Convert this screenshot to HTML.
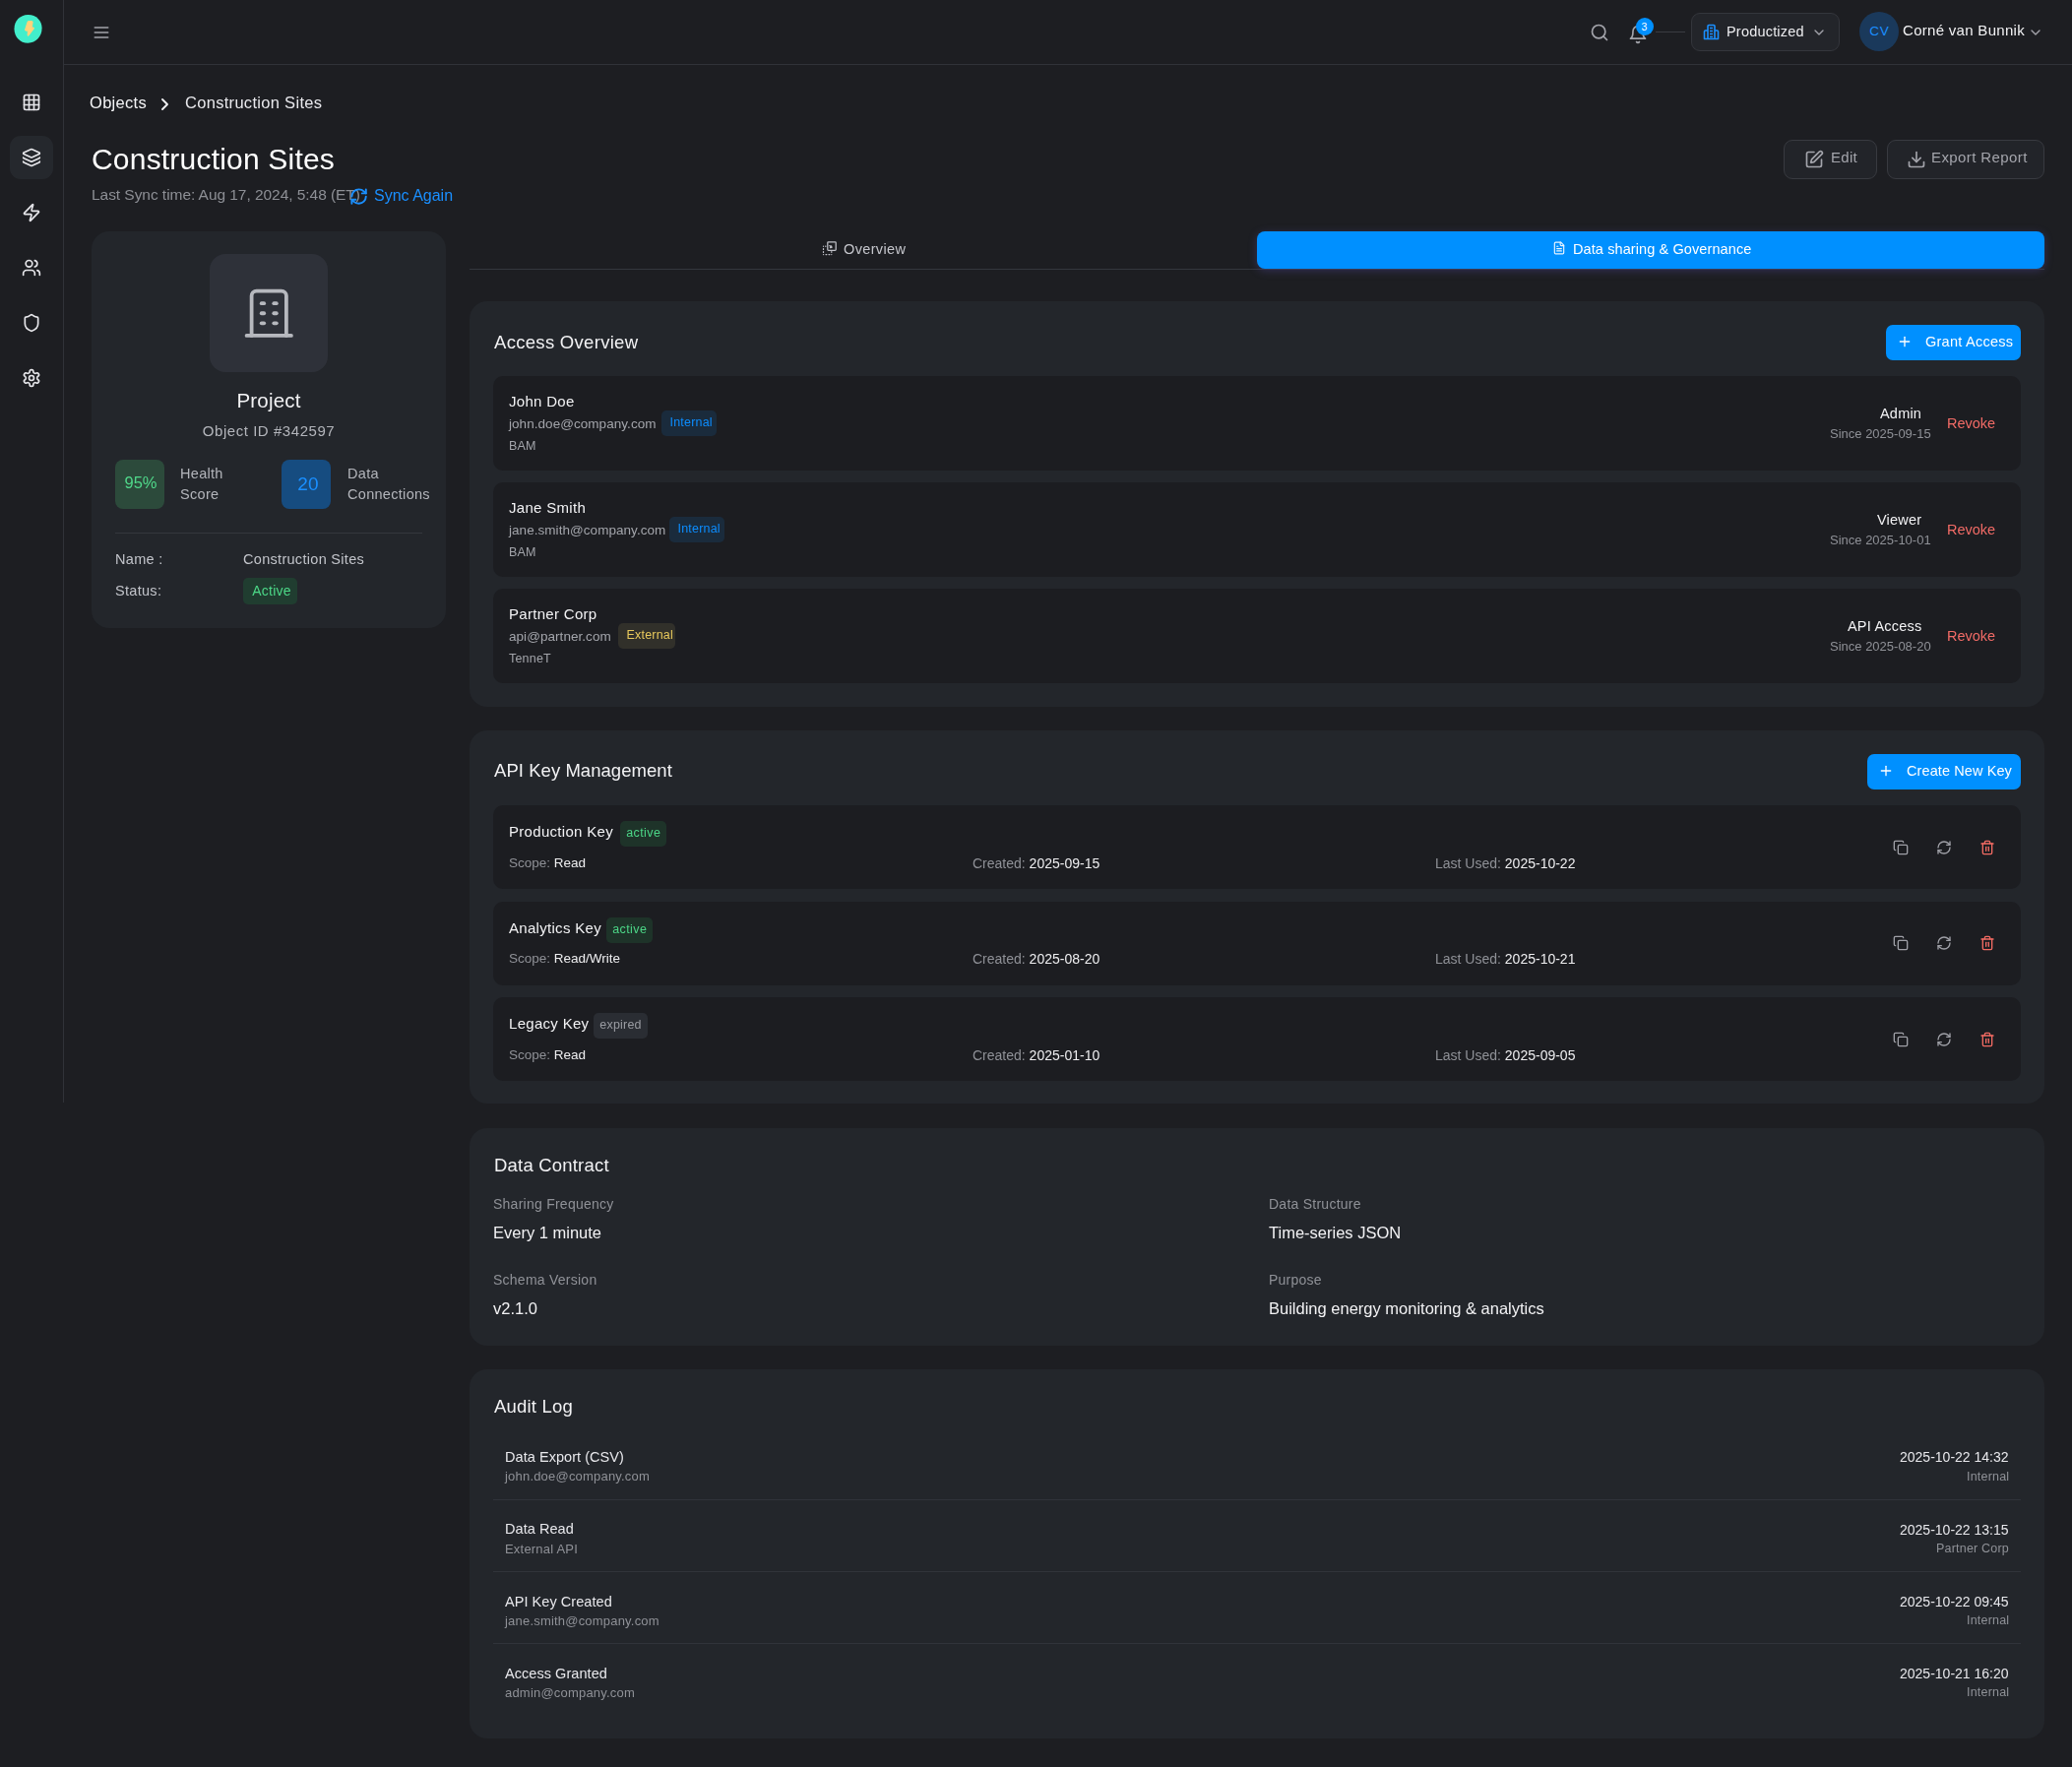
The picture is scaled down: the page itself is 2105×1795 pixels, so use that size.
<!DOCTYPE html>
<html>
<head>
<meta charset="utf-8">
<style>
*{box-sizing:border-box;margin:0;padding:0}
html,body{width:2105px;height:1795px;overflow:hidden;background:#1d1e22;font-family:"Liberation Sans",sans-serif;color:#f2f2f4;-webkit-font-smoothing:antialiased}
.t,.badge{will-change:transform}
.abs{position:absolute}
svg{display:block}
/* sidebar */
#sb{position:absolute;left:0;top:0;width:65px;height:1120px;border-right:1px solid #303238}
#hdr{position:absolute;left:65px;top:0;width:2040px;height:66px;border-bottom:1px solid #303238}
.card{position:absolute;background:#23262b;border-radius:18px}
.row{position:absolute;left:24px;width:1552px;background:#1c1d21;border-radius:10px}
.t{position:absolute;white-space:nowrap;line-height:1}
.btn-blue{position:absolute;background:#0090ff;border-radius:7px;color:#fff}
.badge{position:absolute;border-radius:5px;white-space:nowrap;line-height:1}
</style>
</head>
<body>

<!-- SIDEBAR -->
<div id="sb">
  <svg class="abs" style="left:12px;top:12px" width="34" height="34" viewBox="12 12 34 34">
    <path d="M28.3 14.9 C36.5 14.6 42.6 20.5 42.6 28.6 C42.6 37.3 36.6 43.7 28.4 43.7 C20.2 43.7 14.5 37.5 14.5 29.2 C14.5 20.8 20.3 15.2 28.3 14.9 Z" fill="#42eecb"/>
    <path d="M28.8 21.5 H32.4 Q33.3 21.5 33.2 22.5 L32.4 27.9 H33.9 Q35 28.1 34.4 29.1 L29.2 36 Q28.3 37 28.1 35.8 L28.3 31.2 H26.2 Q25.2 31 25.5 30.1 L28 22.2 Q28.2 21.5 28.8 21.5 Z" fill="#ffd27a" stroke="#ffd27a" stroke-width="0.8" stroke-linejoin="round"/>
  </svg>
  <!-- nav icons -->
  <svg class="abs" style="left:22.2px;top:93.5px" width="20" height="20" viewBox="0 0 24 24" fill="none" stroke="#e6e6ea" stroke-width="2" stroke-linecap="round" stroke-linejoin="round"><rect width="18" height="18" x="3" y="3" rx="2"/><path d="M3 9h18"/><path d="M3 15h18"/><path d="M9 3v18"/><path d="M15 3v18"/></svg>
  <div class="abs" style="left:10px;top:138px;width:44px;height:44px;border-radius:11px;background:#25282d"></div>
  <svg class="abs" style="left:21.9px;top:149.6px" width="20" height="20" viewBox="0 0 24 24" fill="none" stroke="#e6e6ea" stroke-width="2" stroke-linecap="round" stroke-linejoin="round"><path d="M12.83 2.18a2 2 0 0 0-1.66 0L2.6 6.08a1 1 0 0 0 0 1.83l8.58 3.91a2 2 0 0 0 1.66 0l8.58-3.9a1 1 0 0 0 0-1.83z"/><path d="M2 12a1 1 0 0 0 .58.91l8.6 3.91a2 2 0 0 0 1.65 0l8.58-3.9A1 1 0 0 0 22 12"/><path d="M2 17a1 1 0 0 0 .58.91l8.6 3.91a2 2 0 0 0 1.65 0l8.58-3.9A1 1 0 0 0 22 17"/></svg>
  <svg class="abs" style="left:21.9px;top:206px" width="20" height="20" viewBox="0 0 24 24" fill="none" stroke="#e6e6ea" stroke-width="2" stroke-linecap="round" stroke-linejoin="round"><path d="M4 14a1 1 0 0 1-.78-1.63l9.9-10.2a.5.5 0 0 1 .86.46l-1.92 6.02A1 1 0 0 0 13 10h7a1 1 0 0 1 .78 1.63l-9.9 10.2a.5.5 0 0 1-.86-.46l1.92-6.02A1 1 0 0 0 11 14z"/></svg>
  <svg class="abs" style="left:21.9px;top:261.5px" width="20" height="20" viewBox="0 0 24 24" fill="none" stroke="#e6e6ea" stroke-width="2" stroke-linecap="round" stroke-linejoin="round"><path d="M16 21v-2a4 4 0 0 0-4-4H6a4 4 0 0 0-4 4v2"/><circle cx="9" cy="7" r="4"/><path d="M22 21v-2a4 4 0 0 0-3-3.87"/><path d="M16 3.13a4 4 0 0 1 0 7.75"/></svg>
  <svg class="abs" style="left:21.9px;top:317.7px" width="20" height="20" viewBox="0 0 24 24" fill="none" stroke="#e6e6ea" stroke-width="2" stroke-linecap="round" stroke-linejoin="round"><path d="M20 13c0 5-3.5 7.5-7.66 8.95a1 1 0 0 1-.67-.01C7.5 20.5 4 18 4 13V6a1 1 0 0 1 1-1c2 0 4.5-1.2 6.24-2.72a1.17 1.17 0 0 1 1.52 0C14.51 3.81 17 5 19 5a1 1 0 0 1 1 1z"/></svg>
  <svg class="abs" style="left:22.2px;top:373.9px" width="20" height="20" viewBox="0 0 24 24" fill="none" stroke="#e6e6ea" stroke-width="2" stroke-linecap="round" stroke-linejoin="round"><path d="M12.22 2h-.44a2 2 0 0 0-2 2v.18a2 2 0 0 1-1 1.73l-.43.25a2 2 0 0 1-2 0l-.15-.08a2 2 0 0 0-2.73.73l-.22.38a2 2 0 0 0 .73 2.73l.15.1a2 2 0 0 1 1 1.72v.51a2 2 0 0 1-1 1.74l-.15.09a2 2 0 0 0-.73 2.73l.22.38a2 2 0 0 0 2.73.73l.15-.08a2 2 0 0 1 2 0l.43.25a2 2 0 0 1 1 1.73V20a2 2 0 0 0 2 2h.44a2 2 0 0 0 2-2v-.18a2 2 0 0 1 1-1.73l.43-.25a2 2 0 0 1 2 0l.15.08a2 2 0 0 0 2.73-.73l.22-.39a2 2 0 0 0-.73-2.73l-.15-.08a2 2 0 0 1-1-1.74v-.5a2 2 0 0 1 1-1.74l.15-.09a2 2 0 0 0 .73-2.73l-.22-.38a2 2 0 0 0-2.73-.73l-.15.08a2 2 0 0 1-2 0l-.43-.25a2 2 0 0 1-1-1.73V4a2 2 0 0 0-2-2z"/><circle cx="12" cy="12" r="3"/></svg>
</div>

<!-- HEADER -->
<div id="hdr"></div>
<!-- hamburger -->
<svg class="abs" style="left:92.8px;top:22.5px" width="20" height="20" viewBox="0 0 24 24" fill="none" stroke="#a3a4ab" stroke-width="2" stroke-linecap="round"><line x1="4" x2="20" y1="12" y2="12"/><line x1="4" x2="20" y1="6" y2="6"/><line x1="4" x2="20" y1="18" y2="18"/></svg>
<!-- search -->
<svg class="abs" style="left:1615px;top:22.5px" width="20" height="20" viewBox="0 0 24 24" fill="none" stroke="#a3a4ab" stroke-width="2" stroke-linecap="round" stroke-linejoin="round"><circle cx="11" cy="11" r="8"/><path d="m21 21-4.3-4.3"/></svg>
<!-- bell -->
<svg class="abs" style="left:1654.3px;top:24.5px" width="20" height="20" viewBox="0 0 24 24" fill="none" stroke="#a3a4ab" stroke-width="2" stroke-linecap="round" stroke-linejoin="round"><path d="M6 8a6 6 0 0 1 12 0c0 7 3 9 3 9H3s3-2 3-9"/><path d="M10.3 21a1.94 1.94 0 0 0 3.4 0"/></svg>
<div class="abs" style="left:1661.5px;top:18.3px;width:18px;height:18px;border-radius:50%;background:#0090ff;color:#fff;font-size:10.5px;line-height:18px;text-align:center">3</div>
<div class="abs" style="left:1682px;top:32px;width:30px;height:1px;background:#3a3c42"></div>
<!-- productized -->
<div class="abs" style="left:1718px;top:13px;width:151px;height:39px;border:1px solid #34363c;background:#23252a;border-radius:9px"></div>
<svg class="abs" style="left:1730px;top:24px" width="17" height="17" viewBox="0 0 17 17" fill="none" stroke="#1a8fff" stroke-width="1.6" stroke-linejoin="round">
  <path d="M5 15.5 V2.5 a1 1 0 0 1 1-1 h5 a1 1 0 0 1 1 1 V15.5"/>
  <path d="M5 7 H2.5 a1 1 0 0 0-1 1 V15.5 H15.5 V8 a1 1 0 0 0-1-1 H12"/>
  <path d="M7 4.5h3M7 7.5h3M7 10.5h3M7 13.5h3"/>
</svg>
<div class="t" style="left:1754px;top:25px;font-size:14.5px;color:#ececef;letter-spacing:0.2px">Productized</div>
<svg class="abs" style="left:1839.7px;top:24.7px" width="16" height="16" viewBox="0 0 24 24" fill="none" stroke="#a3a4ab" stroke-width="2" stroke-linecap="round" stroke-linejoin="round"><path d="m6 9 6 6 6-6"/></svg>
<!-- avatar -->
<div class="abs" style="left:1889px;top:12.2px;width:40px;height:40px;border-radius:50%;background:#1a395b;color:#1a8fff;font-size:13.5px;line-height:39px;text-align:center;letter-spacing:0.6px;text-indent:0.6px">CV</div>
<div class="t" style="left:1933.3px;top:23px;font-size:15px;color:#f2f2f4;letter-spacing:0.3px">Corné van Bunnik</div>
<svg class="abs" style="left:2060.2px;top:24.5px" width="16" height="16" viewBox="0 0 24 24" fill="none" stroke="#a3a4ab" stroke-width="2" stroke-linecap="round" stroke-linejoin="round"><path d="m6 9 6 6 6-6"/></svg>

<!-- breadcrumb -->
<div class="t" style="left:90.5px;top:96px;font-size:16.5px;color:#f4f4f6;letter-spacing:0.3px">Objects</div>
<svg class="abs" style="left:161px;top:98px" width="13" height="16" viewBox="0 0 13 16" fill="none" stroke="#f0f0f2" stroke-width="1.9" stroke-linecap="round" stroke-linejoin="round">
  <path d="M4 3 L9 8 L4 13"/>
</svg>
<div class="t" style="left:188px;top:96px;font-size:16.5px;color:#e8e8ec;letter-spacing:0.3px">Construction Sites</div>

<!-- title -->
<div class="t" style="left:93px;top:146.8px;font-size:30px;color:#ffffff;letter-spacing:0.2px">Construction Sites</div>
<div class="t" style="left:93px;top:189.5px;font-size:15.5px;color:#8d8f95;letter-spacing:-0.05px">Last Sync time: Aug 17, 2024, 5:48 (ET)</div>
<svg class="abs" style="left:355.25px;top:189.5px" width="19.2" height="19.2" viewBox="0 0 24 24" fill="none" stroke="#1a8fff" stroke-width="2.4" stroke-linecap="round" stroke-linejoin="round"><path d="M3 12a9 9 0 0 1 9-9 9.75 9.75 0 0 1 6.74 2.74L21 8"/><path d="M21 3v5h-5"/><path d="M21 12a9 9 0 0 1-9 9 9.75 9.75 0 0 1-6.74-2.74L3 16"/><path d="M8 16H3v5"/></svg>
<div class="t" style="left:379.5px;top:190.5px;font-size:16px;color:#1a8fff;letter-spacing:0px">Sync Again</div>

<!-- edit/export -->
<div class="abs" style="left:1812px;top:142px;width:95px;height:40px;border:1px solid #383a40;background:#222429;border-radius:9px"></div>
<svg class="abs" style="left:1833px;top:151.6px" width="20" height="20" viewBox="0 0 24 24" fill="none" stroke="#a3a4ab" stroke-width="2" stroke-linecap="round" stroke-linejoin="round"><path d="M12 3H5a2 2 0 0 0-2 2v14a2 2 0 0 0 2 2h14a2 2 0 0 0 2-2v-7"/><path d="M18.375 2.625a1 1 0 0 1 3 3l-9.013 9.014a2 2 0 0 1-.853.505l-2.873.84a.5.5 0 0 1-.62-.62l.84-2.873a2 2 0 0 1 .506-.852z"/></svg>
<div class="t" style="left:1859.5px;top:152.3px;font-size:15px;color:#a3a4ab;letter-spacing:0.3px">Edit</div>
<div class="abs" style="left:1916.5px;top:142px;width:160.5px;height:40px;border:1px solid #383a40;background:#222429;border-radius:9px"></div>
<svg class="abs" style="left:1937.1px;top:151.9px" width="20" height="20" viewBox="0 0 24 24" fill="none" stroke="#a3a4ab" stroke-width="2" stroke-linecap="round" stroke-linejoin="round"><path d="M21 15v4a2 2 0 0 1-2 2H5a2 2 0 0 1-2-2v-4"/><polyline points="7 10 12 15 17 10"/><line x1="12" x2="12" y1="15" y2="3"/></svg>
<div class="t" style="left:1961.7px;top:152.3px;font-size:15px;color:#a3a4ab;letter-spacing:0.4px">Export Report</div>


<!-- LEFT CARD -->
<div class="card" style="left:93px;top:235px;width:360px;height:403px"></div>
<div class="abs" style="left:213px;top:258px;width:120px;height:120px;border-radius:16px;background:#2e3139"></div>
<svg class="abs" style="left:242.9px;top:288px" width="60.5" height="60.5" viewBox="0 0 24 24" fill="none" stroke="#b6b8be" stroke-width="1.5" stroke-linecap="round" stroke-linejoin="round"><path d="M3 21h18"/><path d="M9 8h1"/><path d="M9 12h1"/><path d="M9 16h1"/><path d="M14 8h1"/><path d="M14 12h1"/><path d="M14 16h1"/><path d="M5 21v-16a2 2 0 0 1 2 -2h10a2 2 0 0 1 2 2v16"/></svg>
<div class="t" style="left:93px;width:360px;text-align:center;top:397px;font-size:20.5px;color:#f2f2f4;letter-spacing:0.2px">Project</div>
<div class="t" style="left:93px;width:360px;text-align:center;top:430px;font-size:15px;color:#b3b5bb;letter-spacing:0.55px">Object ID #342597</div>
<div class="abs" style="left:117px;top:467px;width:50px;height:50px;border-radius:8px;background:#2c4a3b"></div>
<div class="t" style="left:118px;width:50px;text-align:center;top:482px;font-size:16.5px;color:#50d88a;letter-spacing:0px">95%</div>
<div class="t" style="left:183px;top:471px;font-size:14.5px;color:#b3b5bb;line-height:21px;white-space:normal;width:80px;letter-spacing:0.3px">Health<br>Score</div>
<div class="abs" style="left:286px;top:467px;width:50px;height:50px;border-radius:8px;background:#164c80"></div>
<div class="t" style="left:287.7px;width:50px;text-align:center;top:482px;font-size:19px;color:#1a8fff;letter-spacing:0.3px">20</div>
<div class="t" style="left:352.5px;top:471px;font-size:14.5px;color:#b3b5bb;line-height:21px;white-space:normal;width:100px;letter-spacing:0.3px">Data<br>Connections</div>
<div class="abs" style="left:117px;top:541px;width:312px;height:1px;background:#34373d"></div>
<div class="t" style="left:117px;top:561px;font-size:14.5px;color:#c2c4ca;letter-spacing:0.3px">Name :</div>
<div class="t" style="left:247px;top:561px;font-size:14.5px;color:#c2c4ca;letter-spacing:0.3px">Construction Sites</div>
<div class="t" style="left:117px;top:593px;font-size:14.5px;color:#c2c4ca;letter-spacing:0.3px">Status:</div>
<div class="badge" style="left:247px;top:587px;width:55px;height:27px;background:#203d30;color:#4cd787;font-size:14px;line-height:27px;text-align:center;letter-spacing:0.2px;text-indent:3px">Active</div>

<!-- TABS -->
<div class="abs" style="left:477px;top:273px;width:1600px;height:1px;background:#34373d"></div>
<svg class="abs" style="left:834px;top:244px" width="17" height="17" viewBox="0 0 17 17" fill="none" stroke="#c0c1c8" stroke-width="1.25" stroke-linecap="round" stroke-linejoin="round">
  <rect x="6.8" y="1.8" width="8.4" height="8.6" rx="0.8"/>
  <path d="M2.5 6.2 v0.1 M2.5 8.6 v0.8 M2.5 11.6 v0.8 M2.5 14.6 h0.1 M5 14.6 h0.8 M8 14.6 h0.8 M10.8 14.6 v-0.1 M10.8 12.3 v-0.6 M4.6 6.2 h0.3"/>
  <path d="M8.8 5.6 L11 7.4 M10.6 5.8 L11 7.4 L9.4 7.6"/>
</svg>
<div class="t" style="left:857px;top:246px;font-size:14.5px;color:#c5c6cc;letter-spacing:0.35px">Overview</div>
<div class="abs" style="left:1277px;top:235px;width:800px;height:38px;border-radius:8px;background:#0090ff;box-shadow:0 2px 8px rgba(80,70,150,0.45)"></div>
<svg class="abs" style="left:1577.25px;top:245.4px" width="14" height="14" viewBox="0 0 24 24" fill="none" stroke="#eaf4ff" stroke-width="2" stroke-linecap="round" stroke-linejoin="round"><path d="M15 2H6a2 2 0 0 0-2 2v16a2 2 0 0 0 2 2h12a2 2 0 0 0 2-2V7Z"/><path d="M14 2v4a2 2 0 0 0 2 2h4"/><path d="M10 9H8"/><path d="M16 13H8"/><path d="M16 17H8"/></svg>
<div class="t" style="left:1598px;top:246px;font-size:14.5px;color:#ffffff;letter-spacing:0.1px">Data sharing &amp; Governance</div>


<!-- ACCESS OVERVIEW -->
<div class="card" style="left:477px;top:306px;width:1600px;height:412px">
  <div class="t" style="left:24.5px;top:33px;font-size:18.5px;color:#f2f2f4;letter-spacing:0.3px">Access Overview</div>
  <div class="btn-blue" style="left:1439px;top:24px;width:137px;height:35.5px"></div>
  <svg class="abs" style="left:1450.1px;top:33.3px" width="16" height="16" viewBox="0 0 24 24" fill="none" stroke="#fff" stroke-width="2" stroke-linecap="round"><path d="M5 12h14"/><path d="M12 5v14"/></svg>
  <div class="t" style="left:1479px;top:33.8px;font-size:14.5px;color:#fff;letter-spacing:0.25px">Grant Access</div>
  <div class="row" style="top:76px;height:95.5px">
    <div class="t" style="left:16px;top:18px;font-size:15px;color:#f2f2f4;letter-spacing:0.3px">John Doe</div>
    <div class="t" style="left:16px;top:41.5px;font-size:13.5px;color:#a3a5ab;letter-spacing:0.05px">john.doe@company.com</div>
    <div class="badge" style="left:171.2px;width:56px;text-align:center;padding:0;top:35px;height:25.5px;font-size:12.5px;line-height:25.5px;padding:0 7px;background:#1a2b3c;color:#0c8dff;letter-spacing:0.2px;text-indent:1.5px">Internal</div>
    <div class="t" style="left:16px;top:65px;font-size:12.5px;color:#a3a5ab;letter-spacing:0.2px">BAM</div>
    <div class="t" style="right:100.5px;top:30.7px;font-size:14.5px;color:#f2f2f4;letter-spacing:0.2px">Admin</div>
    <div class="t" style="left:1358px;top:51.6px;font-size:13px;color:#8f9197;letter-spacing:0px">Since 2025-09-15</div>
    <div class="t" style="left:1477px;top:40.8px;font-size:14.5px;color:#f26b66;letter-spacing:0px">Revoke</div>
  </div>
  <div class="row" style="top:184px;height:95.5px">
    <div class="t" style="left:16px;top:18px;font-size:15px;color:#f2f2f4;letter-spacing:0.3px">Jane Smith</div>
    <div class="t" style="left:16px;top:41.5px;font-size:13.5px;color:#a3a5ab;letter-spacing:0.05px">jane.smith@company.com</div>
    <div class="badge" style="left:179.3px;width:56px;text-align:center;padding:0;top:35px;height:25.5px;font-size:12.5px;line-height:25.5px;padding:0 7px;background:#1a2b3c;color:#0c8dff;letter-spacing:0.2px;text-indent:1.5px">Internal</div>
    <div class="t" style="left:16px;top:65px;font-size:12.5px;color:#a3a5ab;letter-spacing:0.2px">BAM</div>
    <div class="t" style="right:100.5px;top:30.7px;font-size:14.5px;color:#f2f2f4;letter-spacing:0.2px">Viewer</div>
    <div class="t" style="left:1358px;top:51.6px;font-size:13px;color:#8f9197;letter-spacing:0px">Since 2025-10-01</div>
    <div class="t" style="left:1477px;top:40.8px;font-size:14.5px;color:#f26b66;letter-spacing:0px">Revoke</div>
  </div>
  <div class="row" style="top:292px;height:95.5px">
    <div class="t" style="left:16px;top:18px;font-size:15px;color:#f2f2f4;letter-spacing:0.3px">Partner Corp</div>
    <div class="t" style="left:16px;top:41.5px;font-size:13.5px;color:#a3a5ab;letter-spacing:0.05px">api@partner.com</div>
    <div class="badge" style="left:127.4px;width:57.5px;text-align:center;padding:0;top:35px;height:25.5px;font-size:12.5px;line-height:25.5px;padding:0 7px;background:#31302a;color:#e8c95c;letter-spacing:0.2px;text-indent:1.5px">External</div>
    <div class="t" style="left:16px;top:65px;font-size:12.5px;color:#a3a5ab;letter-spacing:0.2px">TenneT</div>
    <div class="t" style="right:100.5px;top:30.7px;font-size:14.5px;color:#f2f2f4;letter-spacing:0.2px">API Access</div>
    <div class="t" style="left:1358px;top:51.6px;font-size:13px;color:#8f9197;letter-spacing:0px">Since 2025-08-20</div>
    <div class="t" style="left:1477px;top:40.8px;font-size:14.5px;color:#f26b66;letter-spacing:0px">Revoke</div>
  </div>
</div>


<!-- API KEYS -->
<div class="card" style="left:477px;top:742px;width:1600px;height:379px">
  <div class="t" style="left:24.5px;top:32px;font-size:18.5px;color:#f2f2f4;letter-spacing:0.05px">API Key Management</div>
  <div class="btn-blue" style="left:1420px;top:24px;width:156px;height:35.5px"></div>
  <svg class="abs" style="left:1431.1px;top:33.2px" width="16" height="16" viewBox="0 0 24 24" fill="none" stroke="#fff" stroke-width="2" stroke-linecap="round"><path d="M5 12h14"/><path d="M12 5v14"/></svg>
  <div class="t" style="left:1460px;top:33.6px;font-size:14.5px;color:#fff;letter-spacing:0.1px">Create New Key</div>
  <div class="row" style="top:76.0px;height:85px">
    <div class="t" style="left:16px;top:19.2px;font-size:15px;color:#f2f2f4;letter-spacing:0.3px">Production Key</div>
    <div class="badge" style="left:128.6px;top:16px;width:46.5px;height:25.5px;text-align:center;font-size:12.5px;line-height:25.5px;background:#1e3329;color:#4cd787;letter-spacing:0.4px;text-indent:1px">active</div>
    <div class="t" style="left:16px;top:51.8px;font-size:13.5px;color:#8f9197;letter-spacing:0px">Scope: <span style="color:#eeeef0">Read</span></div>
    <div class="t" style="left:487px;top:51.8px;font-size:14px;color:#8f9197;letter-spacing:0px">Created: <span style="color:#eeeef0">2025-09-15</span></div>
    <div class="t" style="left:957px;top:51.8px;font-size:14px;color:#8f9197;letter-spacing:0px">Last Used: <span style="color:#eeeef0">2025-10-22</span></div>
    <svg class="abs" style="left:1422px;top:34.5px" width="16" height="16" viewBox="0 0 24 24" fill="none" stroke="#9fa0a7" stroke-width="2" stroke-linecap="round" stroke-linejoin="round"><rect width="14" height="14" x="8" y="8" rx="2" ry="2"/><path d="M4 16c-1.1 0-2-.9-2-2V4c0-1.1.9-2 2-2h10c1.1 0 2 .9 2 2"/></svg>
    <svg class="abs" style="left:1465.7px;top:34.5px" width="16" height="16" viewBox="0 0 24 24" fill="none" stroke="#9fa0a7" stroke-width="2" stroke-linecap="round" stroke-linejoin="round"><path d="M3 12a9 9 0 0 1 9-9 9.75 9.75 0 0 1 6.74 2.74L21 8"/><path d="M21 3v5h-5"/><path d="M21 12a9 9 0 0 1-9 9 9.75 9.75 0 0 1-6.74-2.74L3 16"/><path d="M8 16H3v5"/></svg>
    <svg class="abs" style="left:1509.7px;top:34.6px" width="16" height="16" viewBox="0 0 24 24" fill="none" stroke="#f26b63" stroke-width="2" stroke-linecap="round" stroke-linejoin="round"><path d="M3 6h18"/><path d="M19 6v14c0 1-1 2-2 2H7c-1 0-2-1-2-2V6"/><path d="M8 6V4c0-1 1-2 2-2h4c1 0 2 1 2 2v2"/><line x1="10" x2="10" y1="11" y2="17"/><line x1="14" x2="14" y1="11" y2="17"/></svg>
  </div>
  <div class="row" style="top:173.5px;height:85px">
    <div class="t" style="left:16px;top:19.2px;font-size:15px;color:#f2f2f4;letter-spacing:0.3px">Analytics Key</div>
    <div class="badge" style="left:114.5px;top:16px;width:46.5px;height:25.5px;text-align:center;font-size:12.5px;line-height:25.5px;background:#1e3329;color:#4cd787;letter-spacing:0.4px;text-indent:1px">active</div>
    <div class="t" style="left:16px;top:51.8px;font-size:13.5px;color:#8f9197;letter-spacing:0px">Scope: <span style="color:#eeeef0">Read/Write</span></div>
    <div class="t" style="left:487px;top:51.8px;font-size:14px;color:#8f9197;letter-spacing:0px">Created: <span style="color:#eeeef0">2025-08-20</span></div>
    <div class="t" style="left:957px;top:51.8px;font-size:14px;color:#8f9197;letter-spacing:0px">Last Used: <span style="color:#eeeef0">2025-10-21</span></div>
    <svg class="abs" style="left:1422px;top:34.5px" width="16" height="16" viewBox="0 0 24 24" fill="none" stroke="#9fa0a7" stroke-width="2" stroke-linecap="round" stroke-linejoin="round"><rect width="14" height="14" x="8" y="8" rx="2" ry="2"/><path d="M4 16c-1.1 0-2-.9-2-2V4c0-1.1.9-2 2-2h10c1.1 0 2 .9 2 2"/></svg>
    <svg class="abs" style="left:1465.7px;top:34.5px" width="16" height="16" viewBox="0 0 24 24" fill="none" stroke="#9fa0a7" stroke-width="2" stroke-linecap="round" stroke-linejoin="round"><path d="M3 12a9 9 0 0 1 9-9 9.75 9.75 0 0 1 6.74 2.74L21 8"/><path d="M21 3v5h-5"/><path d="M21 12a9 9 0 0 1-9 9 9.75 9.75 0 0 1-6.74-2.74L3 16"/><path d="M8 16H3v5"/></svg>
    <svg class="abs" style="left:1509.7px;top:34.6px" width="16" height="16" viewBox="0 0 24 24" fill="none" stroke="#f26b63" stroke-width="2" stroke-linecap="round" stroke-linejoin="round"><path d="M3 6h18"/><path d="M19 6v14c0 1-1 2-2 2H7c-1 0-2-1-2-2V6"/><path d="M8 6V4c0-1 1-2 2-2h4c1 0 2 1 2 2v2"/><line x1="10" x2="10" y1="11" y2="17"/><line x1="14" x2="14" y1="11" y2="17"/></svg>
  </div>
  <div class="row" style="top:271.0px;height:85px">
    <div class="t" style="left:16px;top:19.2px;font-size:15px;color:#f2f2f4;letter-spacing:0.3px">Legacy Key</div>
    <div class="badge" style="left:101.5px;top:16px;width:55px;height:25.5px;text-align:center;font-size:12.5px;line-height:25.5px;background:#2a2d33;color:#9a9ca2;letter-spacing:0.2px">expired</div>
    <div class="t" style="left:16px;top:51.8px;font-size:13.5px;color:#8f9197;letter-spacing:0px">Scope: <span style="color:#eeeef0">Read</span></div>
    <div class="t" style="left:487px;top:51.8px;font-size:14px;color:#8f9197;letter-spacing:0px">Created: <span style="color:#eeeef0">2025-01-10</span></div>
    <div class="t" style="left:957px;top:51.8px;font-size:14px;color:#8f9197;letter-spacing:0px">Last Used: <span style="color:#eeeef0">2025-09-05</span></div>
    <svg class="abs" style="left:1422px;top:34.5px" width="16" height="16" viewBox="0 0 24 24" fill="none" stroke="#9fa0a7" stroke-width="2" stroke-linecap="round" stroke-linejoin="round"><rect width="14" height="14" x="8" y="8" rx="2" ry="2"/><path d="M4 16c-1.1 0-2-.9-2-2V4c0-1.1.9-2 2-2h10c1.1 0 2 .9 2 2"/></svg>
    <svg class="abs" style="left:1465.7px;top:34.5px" width="16" height="16" viewBox="0 0 24 24" fill="none" stroke="#9fa0a7" stroke-width="2" stroke-linecap="round" stroke-linejoin="round"><path d="M3 12a9 9 0 0 1 9-9 9.75 9.75 0 0 1 6.74 2.74L21 8"/><path d="M21 3v5h-5"/><path d="M21 12a9 9 0 0 1-9 9 9.75 9.75 0 0 1-6.74-2.74L3 16"/><path d="M8 16H3v5"/></svg>
    <svg class="abs" style="left:1509.7px;top:34.6px" width="16" height="16" viewBox="0 0 24 24" fill="none" stroke="#f26b63" stroke-width="2" stroke-linecap="round" stroke-linejoin="round"><path d="M3 6h18"/><path d="M19 6v14c0 1-1 2-2 2H7c-1 0-2-1-2-2V6"/><path d="M8 6V4c0-1 1-2 2-2h4c1 0 2 1 2 2v2"/><line x1="10" x2="10" y1="11" y2="17"/><line x1="14" x2="14" y1="11" y2="17"/></svg>
  </div>
</div>


<!-- DATA CONTRACT -->
<div class="card" style="left:477px;top:1146px;width:1600px;height:220.5px">
  <div class="t" style="left:24.5px;top:29px;font-size:18.5px;color:#f2f2f4;letter-spacing:0.2px">Data Contract</div>
  <div class="t" style="left:24px;top:70px;font-size:14px;color:#8f9197;letter-spacing:0.25px">Sharing Frequency</div>
  <div class="t" style="left:24px;top:97.5px;font-size:16.5px;color:#f2f2f4;letter-spacing:0px">Every 1 minute</div>
  <div class="t" style="left:24px;top:147px;font-size:14px;color:#8f9197;letter-spacing:0.25px">Schema Version</div>
  <div class="t" style="left:24px;top:174.5px;font-size:16.5px;color:#f2f2f4;letter-spacing:0px">v2.1.0</div>
  <div class="t" style="left:812px;top:70px;font-size:14px;color:#8f9197;letter-spacing:0.25px">Data Structure</div>
  <div class="t" style="left:812px;top:97.5px;font-size:16.5px;color:#f2f2f4;letter-spacing:0px">Time-series JSON</div>
  <div class="t" style="left:812px;top:147px;font-size:14px;color:#8f9197;letter-spacing:0.25px">Purpose</div>
  <div class="t" style="left:812px;top:174.5px;font-size:16.5px;color:#f2f2f4;letter-spacing:0px">Building energy monitoring &amp; analytics</div>
</div>

<!-- AUDIT LOG -->
<div class="card" style="left:477px;top:1391px;width:1600px;height:375px">
  <div class="t" style="left:24.5px;top:28.5px;font-size:18.5px;color:#f2f2f4;letter-spacing:0.2px">Audit Log</div>
  <div class="abs" style="left:24px;top:65.0px;width:1552px;height:73.3px">
    <div class="t" style="left:12px;top:17px;font-size:14.5px;color:#e8e8ec;letter-spacing:0.05px">Data Export (CSV)</div>
    <div class="t" style="left:12px;top:37.3px;font-size:13px;color:#8f9197;letter-spacing:0.2px">john.doe@company.com</div>
    <div class="t" style="right:12px;top:17.3px;font-size:14px;color:#e8e8ec;letter-spacing:0px">2025-10-22 14:32</div>
    <div class="t" style="right:12px;top:37.5px;font-size:12.5px;color:#8f9197;letter-spacing:0.2px">Internal</div>
  </div>
  <div class="abs" style="left:24px;top:131.5px;width:1552px;height:1px;background:#30333a"></div>
  <div class="abs" style="left:24px;top:138.3px;width:1552px;height:73.3px">
    <div class="t" style="left:12px;top:17px;font-size:14.5px;color:#e8e8ec;letter-spacing:0.05px">Data Read</div>
    <div class="t" style="left:12px;top:37.3px;font-size:13px;color:#8f9197;letter-spacing:0.2px">External API</div>
    <div class="t" style="right:12px;top:17.3px;font-size:14px;color:#e8e8ec;letter-spacing:0px">2025-10-22 13:15</div>
    <div class="t" style="right:12px;top:37.5px;font-size:12.5px;color:#8f9197;letter-spacing:0.2px">Partner Corp</div>
  </div>
  <div class="abs" style="left:24px;top:204.8px;width:1552px;height:1px;background:#30333a"></div>
  <div class="abs" style="left:24px;top:211.6px;width:1552px;height:73.3px">
    <div class="t" style="left:12px;top:17px;font-size:14.5px;color:#e8e8ec;letter-spacing:0.05px">API Key Created</div>
    <div class="t" style="left:12px;top:37.3px;font-size:13px;color:#8f9197;letter-spacing:0.2px">jane.smith@company.com</div>
    <div class="t" style="right:12px;top:17.3px;font-size:14px;color:#e8e8ec;letter-spacing:0px">2025-10-22 09:45</div>
    <div class="t" style="right:12px;top:37.5px;font-size:12.5px;color:#8f9197;letter-spacing:0.2px">Internal</div>
  </div>
  <div class="abs" style="left:24px;top:278.1px;width:1552px;height:1px;background:#30333a"></div>
  <div class="abs" style="left:24px;top:284.9px;width:1552px;height:73.3px">
    <div class="t" style="left:12px;top:17px;font-size:14.5px;color:#e8e8ec;letter-spacing:0.05px">Access Granted</div>
    <div class="t" style="left:12px;top:37.3px;font-size:13px;color:#8f9197;letter-spacing:0.2px">admin@company.com</div>
    <div class="t" style="right:12px;top:17.3px;font-size:14px;color:#e8e8ec;letter-spacing:0px">2025-10-21 16:20</div>
    <div class="t" style="right:12px;top:37.5px;font-size:12.5px;color:#8f9197;letter-spacing:0.2px">Internal</div>
  </div>
</div>

</body>
</html>
